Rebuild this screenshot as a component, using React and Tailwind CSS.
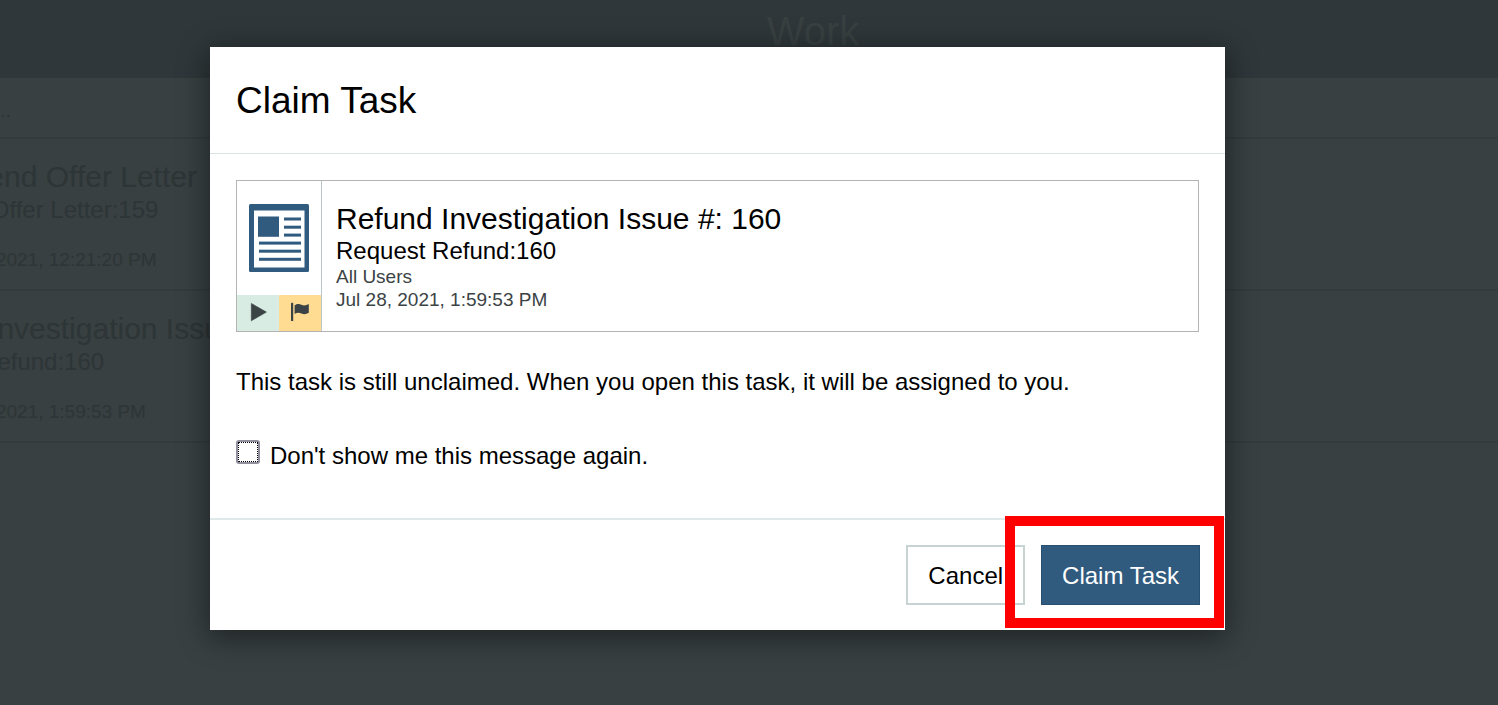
const tasks = [
  {
    title: "Email Send Offer Letter",
    subtitle: "Generate Offer Letter:159",
    date: "Date: Jul 28, 2021, 12:21:20 PM",
  },
  {
    title: "Refund Investigation Issue #: 160",
    subtitle: "Request Refund:160",
    date: "Date: Jul 28, 2021, 1:59:53 PM",
  },
];

function DocumentIcon() {
  return (
    <svg viewBox="0 0 60 68" className="h-[68px] w-[60px]" aria-hidden="true">
      <rect width="60" height="68" rx="1.5" fill="#315b7e" />
      <rect x="5" y="6.5" width="50.5" height="57" fill="#fff" />
      <g fill="#315b7e">
        <rect x="9" y="12.5" width="21" height="20.3" />
        <rect x="35" y="13.5" width="17" height="3" />
        <rect x="35" y="21.7" width="17" height="3" />
        <rect x="35" y="29.6" width="17" height="3" />
        <rect x="10" y="37.6" width="42" height="3" />
        <rect x="10" y="45.7" width="42" height="3" />
        <rect x="10" y="53.8" width="42" height="3" />
      </g>
    </svg>
  );
}

function PlayIcon() {
  return (
    <svg viewBox="0 0 42 36" className="h-9 w-full" aria-hidden="true">
      <path d="M14.3 8.4 V25.8 L29.4 17.1 Z" fill="#3b4345" stroke="#3b4345" strokeWidth=".6" strokeLinejoin="round" />
    </svg>
  );
}

function FlagIcon() {
  return (
    <svg viewBox="0 0 42 36" className="h-9 w-full" aria-hidden="true">
      <rect x="12" y="7.8" width="2.2" height="18.2" rx=".6" fill="#3b4345" />
      <path
        d="M15.6 10.4 C18 8.6 20.3 8.8 22.4 9.8 C24.8 10.9 27.4 10.4 29.8 9 V17.8 C27.4 19.3 24.8 19.6 22.4 18.5 C20.3 17.5 18 17.4 15.6 19 Z"
        fill="#3b4345"
      />
    </svg>
  );
}

export default function App() {
  return (
    <div className="relative min-h-screen overflow-hidden bg-[#384041] font-['Liberation_Sans',Arial,sans-serif]">
      <main className="text-[#2d3536]">
        <header className="flex h-[78px] items-start justify-center bg-[#2f373a] pt-2 pl-32">
          <h1 className="text-[40px] leading-[46px] text-[#384041]">Work</h1>
        </header>
        <div className="h-[61px] overflow-hidden border-b-2 border-[#333b3c] pt-5 text-xl leading-6">..</div>
        <ul>
          {tasks.map((task) => (
            <li key={task.title} className="-ml-[116px] h-[152px] border-b-2 border-[#333b3c] pt-5 whitespace-nowrap">
              <h2 className="text-[30px] leading-9">{task.title}</h2>
              <p className="text-2xl leading-[30px]">{task.subtitle}</p>
              <p className="text-[19px] leading-[23px]">All Users</p>
              <p className="text-[19px] leading-[23px]">{task.date}</p>
            </li>
          ))}
        </ul>
      </main>

      <div className="absolute inset-0 flex items-start pt-[47px] pr-[273px] pl-[210px]">
        <section
          role="dialog"
          aria-labelledby="dialog-title"
          className="min-w-0 flex-1 bg-white text-black shadow-[0_6px_28px_2px_rgba(0,0,0,0.45)]"
        >
          <div className="border-b border-[#d9e4e4] px-[26px] pt-8 pb-[30px]">
            <h2 id="dialog-title" className="text-[37px] leading-[44px]">Claim Task</h2>
          </div>

          <div className="px-[26px] pt-[26px] pb-12">
            <div className="flex h-[152px] border border-[#b4b4b4]">
              <div className="flex w-[85px] shrink-0 flex-col border-r border-[#b9c7ca]">
                <div className="flex flex-1 items-center justify-center">
                  <DocumentIcon />
                </div>
                <div className="grid grid-cols-2">
                  <span className="bg-[#d9ece3]"><PlayIcon /></span>
                  <span className="bg-[#ffdc92]"><FlagIcon /></span>
                </div>
              </div>
              <div className="px-3.5 pt-5">
                <h3 className="text-[30px] leading-9">Refund Investigation Issue #: 160</h3>
                <p className="text-2xl leading-7">Request Refund:160</p>
                <p className="text-[19px] leading-[23px] text-[#3b4345]">All Users</p>
                <p className="text-[19px] leading-[23px] text-[#3b4345]">Jul 28, 2021, 1:59:53 PM</p>
              </div>
            </div>

            <p className="mt-9 text-2xl leading-7">
              This task is still unclaimed. When you open this task, it will be assigned to you.
            </p>

            <div className="mt-11 flex items-start gap-2.5">
              <input
                id="hide-message"
                type="checkbox"
                className="size-6 shrink-0 appearance-none rounded-[3px] border-2 border-[#8f8f9d] bg-white outline-1 -outline-offset-3 outline-black outline-dotted"
              />
              <label htmlFor="hide-message" className="pt-0.5 text-2xl leading-7">
                Don't show me this message again.
              </label>
            </div>
          </div>

          <footer className="flex justify-end gap-4 border-t-2 border-[#dfe9e9] pt-[25px] pr-[25px] pb-[25px] pl-[26px]">
            <button type="button" className="h-[60px] border-2 border-[#c8d3d4] px-5 pt-0.5 text-2xl">
              Cancel
            </button>
            <div className="relative">
              <button type="button" className="h-[60px] border border-[#294f70] bg-[#315b7e] px-5 pt-0.5 text-2xl text-white">
                Claim Task
              </button>
              <div className="pointer-events-none absolute -top-[29px] -right-6 -bottom-[23px] -left-9 border-10 border-[#ff0000]" />
            </div>
          </footer>
        </section>
      </div>
    </div>
  );
}
